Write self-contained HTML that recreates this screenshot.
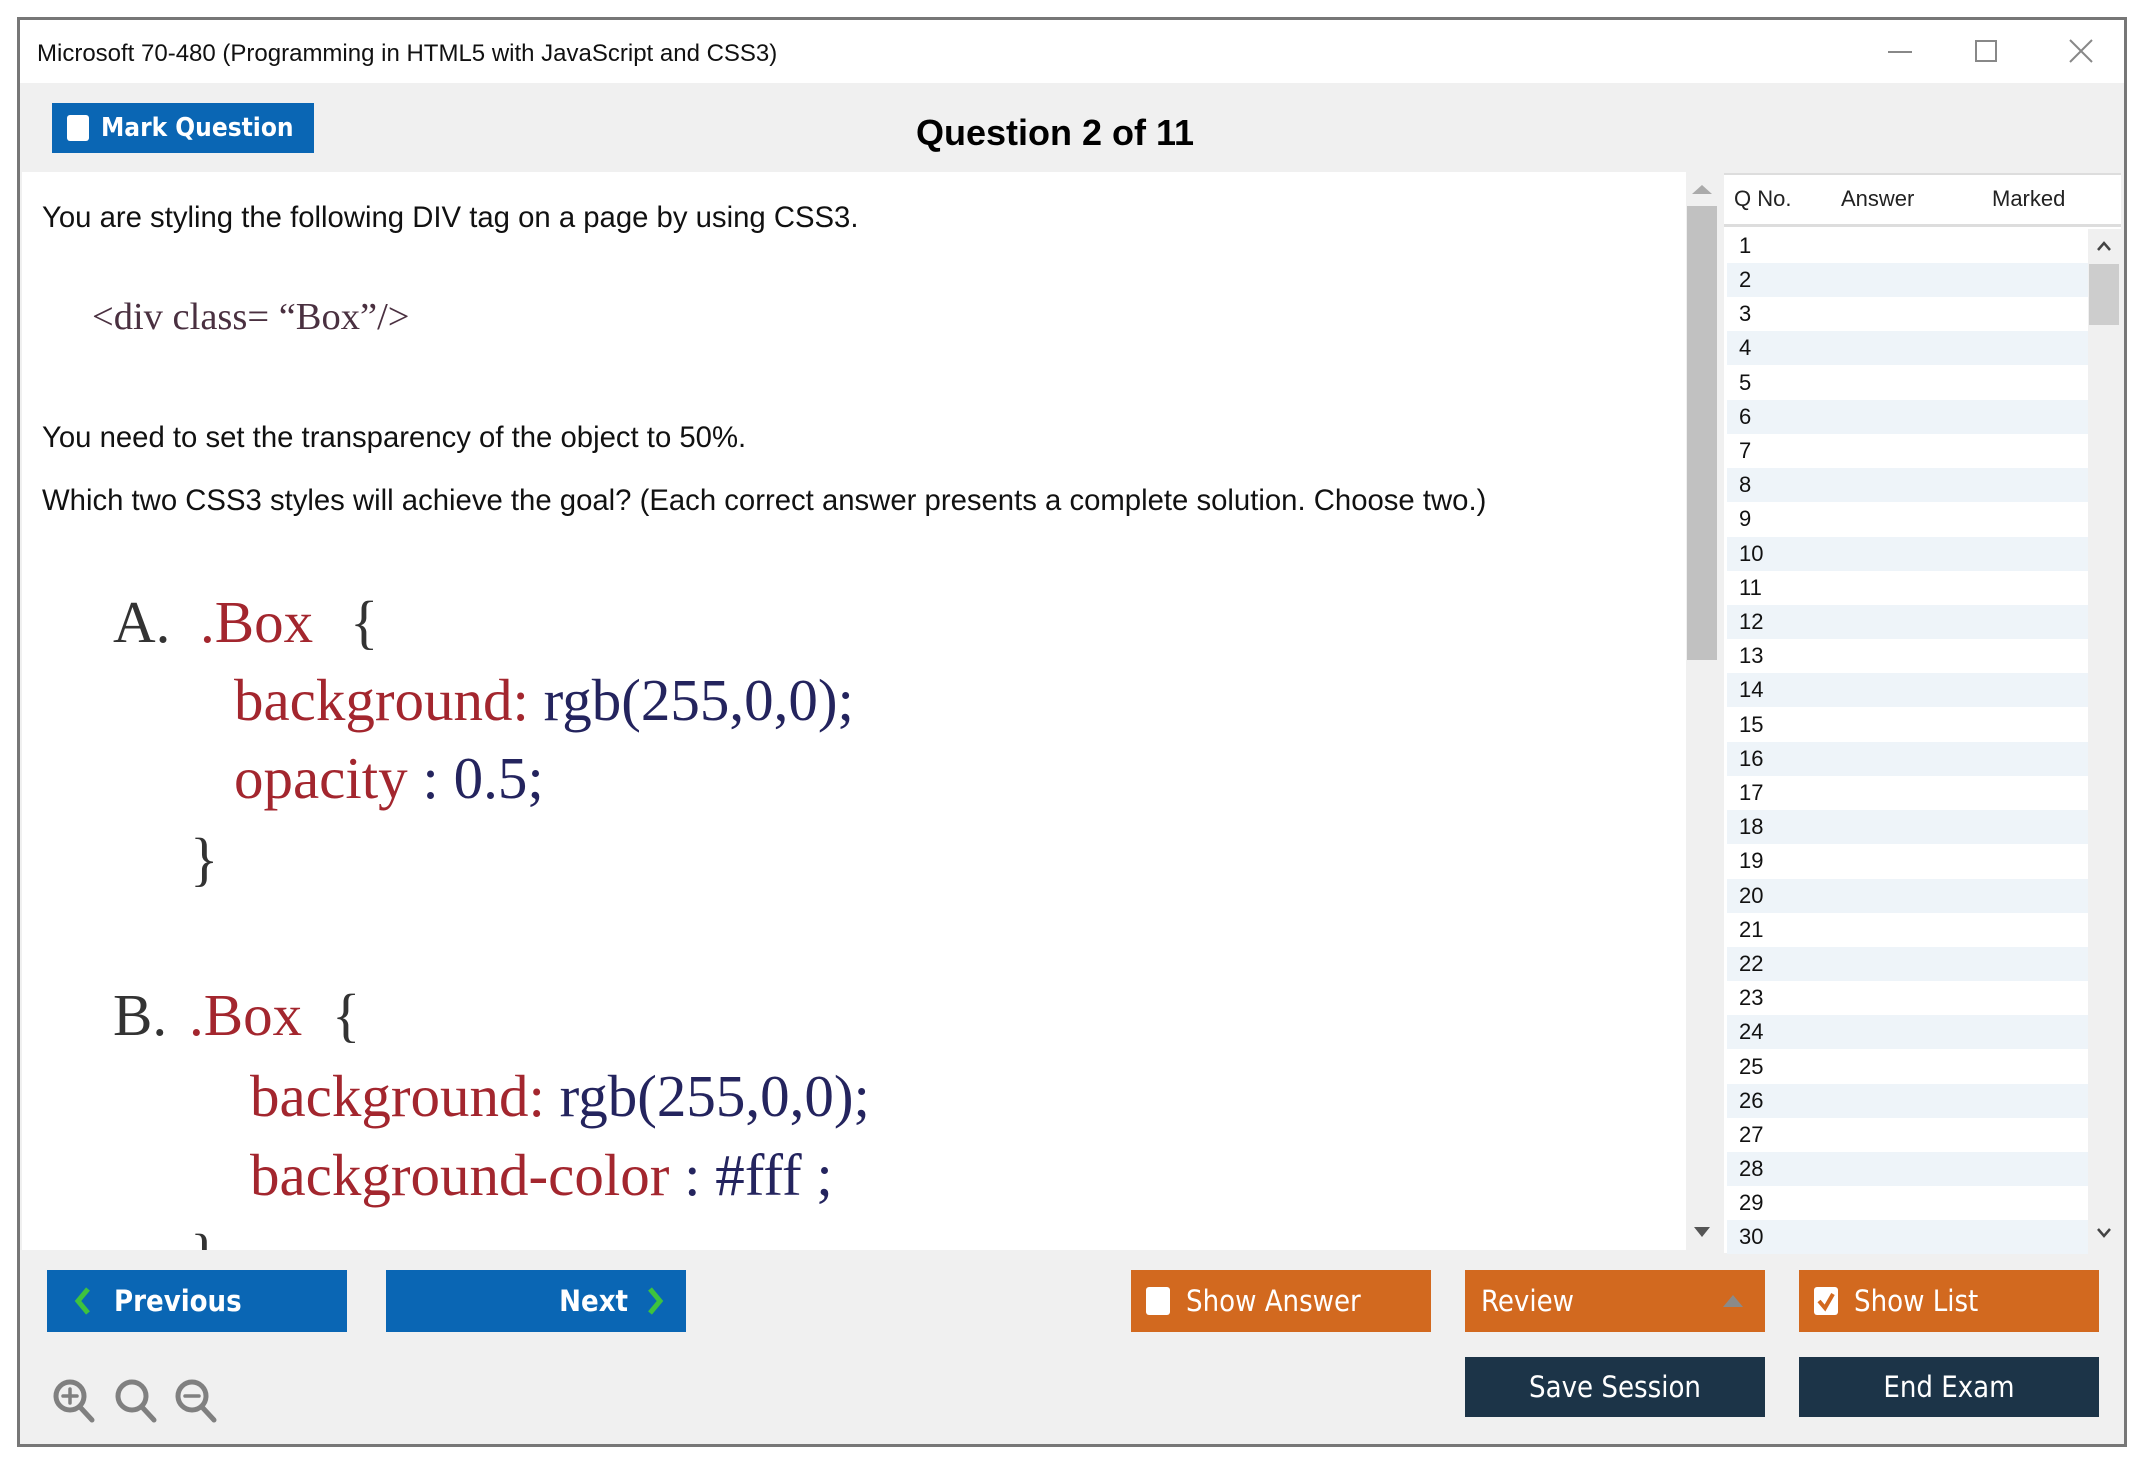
<!DOCTYPE html>
<html><head><meta charset="utf-8">
<style>
*{margin:0;padding:0;box-sizing:border-box}
body{width:2150px;height:1470px;background:#fff;position:relative;overflow:hidden;font-family:"Liberation Sans",sans-serif}
.a{position:absolute;white-space:nowrap}
.win{position:absolute;left:17px;top:17px;width:2110px;height:1430px;border:3px solid #777;background:#f0f0f0}
.t{font-size:29.3px;color:#111;line-height:34px}
.serif{font-family:"Liberation Serif",serif}
.r{color:#a3262e}.n{color:#24245e}
.btn{position:absolute;color:#fff;font-family:"DejaVu Sans Condensed","Liberation Sans",sans-serif;font-size:29px;display:flex;align-items:center}
.blue{background:#0a66b4}.or{background:#d2691f}.navy{background:#1c3448;justify-content:center}
.cb{width:24px;height:28px;background:#fff;border-radius:3px;display:inline-block}
.row{position:absolute;left:1727px;width:361px;height:34.2px;font-size:22px;color:#111;padding-left:12px;line-height:34px}
.row.e{background:#eef4f9}
</style></head><body>
<div class="win"></div>
<div class="a" style="left:20px;top:20px;width:2104px;height:63px;background:#fff"></div>
<div class="a" style="left:37px;top:40px;font-size:24px;color:#111">Microsoft 70-480 (Programming in HTML5 with JavaScript and CSS3)</div>
<div class="a" style="left:1888px;top:51px;width:24px;height:2px;background:#888"></div>
<div class="a" style="left:1975px;top:40px;width:22px;height:22px;border:2px solid #888"></div>
<svg class="a" style="left:2068px;top:38px" width="26" height="26"><path d="M2 2L24 24M24 2L2 24" stroke="#888" stroke-width="2"/></svg>
<div class="btn blue" style="left:52px;top:103px;width:262px;height:50px;padding-left:15px;font-weight:bold;font-size:26px"><span class="cb" style="margin-right:12px;width:22px;height:26px"></span>Mark Question</div>
<div class="a" style="left:0;width:2110px;top:112px;text-align:center;font-size:36px;font-weight:bold;color:#000">Question 2 of 11</div>
<div class="a" style="left:22px;top:172px;width:1664px;height:1078px;background:#fff;overflow:hidden">
<div class="a t" style="left:20px;top:29px">You are styling the following DIV tag on a page by using CSS3.</div>
<div class="a serif" style="left:70px;top:123px;font-size:38.5px;color:#4a3040">&lt;div class= “Box”/&gt;</div>
<div class="a t" style="left:20px;top:249px">You need to set the transparency of the object to 50%.</div>
<div class="a t" style="left:20px;top:312px">Which two CSS3 styles will achieve the goal? (Each correct answer presents a complete solution. Choose two.)</div>
<div class="a serif" style="left:91px;top:416px;font-size:59px;color:#333">A.</div>
<div class="a serif r" style="left:178px;top:416px;font-size:59px">.Box</div>
<div class="a serif" style="left:328px;top:416px;font-size:59px;color:#333">{</div>
<div class="a serif" style="left:212px;top:494px;font-size:59px"><span class="r">background:</span> <span class="n">rgb(255,0,0);</span></div>
<div class="a serif" style="left:212px;top:572px;font-size:59px"><span class="r">opacity</span> <span class="n">: 0.5;</span></div>
<div class="a serif" style="left:168px;top:653px;font-size:59px;color:#333">}</div>
<div class="a serif" style="left:91px;top:809px;font-size:59px;color:#333">B.</div>
<div class="a serif r" style="left:167px;top:809px;font-size:59px">.Box</div>
<div class="a serif" style="left:310px;top:809px;font-size:59px;color:#333">{</div>
<div class="a serif" style="left:228px;top:890px;font-size:59px"><span class="r">background:</span> <span class="n">rgb(255,0,0);</span></div>
<div class="a serif" style="left:228px;top:969px;font-size:59px"><span class="r">background-color</span> <span class="n">: #fff ;</span></div>
<div class="a serif" style="left:168px;top:1049px;font-size:59px;color:#333">}</div>
</div>
<div class="a" style="left:1686px;top:172px;width:33px;height:1078px;background:#f0f0f0"></div>
<div class="a" style="left:1692px;top:185px;border-left:10px solid transparent;border-right:10px solid transparent;border-bottom:9px solid #aaa"></div>
<div class="a" style="left:1687px;top:206px;width:30px;height:454px;background:#c1c1c1"></div>
<div class="a" style="left:1694px;top:1227px;border-left:8px solid transparent;border-right:8px solid transparent;border-top:10px solid #555"></div>
<div class="a" style="left:1724px;top:173px;width:397px;height:1080px;background:#fff;border-top:2px solid #ddd"></div>
<div class="a" style="left:1724px;top:224px;width:397px;height:3px;background:#ddd"></div>
<div class="a" style="left:1734px;top:186px;font-size:22px;color:#222">Q No.</div>
<div class="a" style="left:1841px;top:186px;font-size:22px;color:#222">Answer</div>
<div class="a" style="left:1992px;top:186px;font-size:22px;color:#222">Marked</div>
<div class="row" style="top:229px">1</div><div class="row e" style="top:263px">2</div><div class="row" style="top:297px">3</div><div class="row e" style="top:331px">4</div><div class="row" style="top:366px">5</div><div class="row e" style="top:400px">6</div><div class="row" style="top:434px">7</div><div class="row e" style="top:468px">8</div><div class="row" style="top:502px">9</div><div class="row e" style="top:537px">10</div><div class="row" style="top:571px">11</div><div class="row e" style="top:605px">12</div><div class="row" style="top:639px">13</div><div class="row e" style="top:673px">14</div><div class="row" style="top:708px">15</div><div class="row e" style="top:742px">16</div><div class="row" style="top:776px">17</div><div class="row e" style="top:810px">18</div><div class="row" style="top:844px">19</div><div class="row e" style="top:879px">20</div><div class="row" style="top:913px">21</div><div class="row e" style="top:947px">22</div><div class="row" style="top:981px">23</div><div class="row e" style="top:1015px">24</div><div class="row" style="top:1050px">25</div><div class="row e" style="top:1084px">26</div><div class="row" style="top:1118px">27</div><div class="row e" style="top:1152px">28</div><div class="row" style="top:1186px">29</div><div class="row e" style="top:1220px">30</div>
<div class="a" style="left:2088px;top:229px;width:33px;height:1024px;background:#f0f0f0"></div>
<div class="a" style="left:2089px;top:264px;width:30px;height:61px;background:#cdcdcd"></div>
<svg class="a" style="left:2096px;top:240px" width="16" height="12"><path d="M2 10L8 3L14 10" stroke="#444" stroke-width="2.5" fill="none"/></svg>
<svg class="a" style="left:2096px;top:1227px" width="16" height="12"><path d="M2 2L8 9L14 2" stroke="#444" stroke-width="2.5" fill="none"/></svg>
<div class="btn blue" style="left:47px;top:1270px;width:300px;height:62px;font-weight:bold"><svg style="margin:0 22px 0 27px" width="18" height="30"><path d="M14 3L4 15L14 27" stroke="#3ec33e" stroke-width="5" fill="none"/></svg>Previous</div>
<div class="btn blue" style="left:386px;top:1270px;width:300px;height:62px;font-weight:bold;justify-content:flex-end;padding-right:22px">Next<svg style="margin-left:18px" width="18" height="30"><path d="M4 3L14 15L4 27" stroke="#3ec33e" stroke-width="5" fill="none"/></svg></div>
<div class="btn or" style="left:1131px;top:1270px;width:300px;height:62px;padding-left:15px"><span class="cb" style="margin-right:16px"></span>Show Answer</div>
<div class="btn or" style="left:1465px;top:1270px;width:300px;height:62px;padding-left:16px">Review<span style="margin-left:auto;margin-right:22px;border-left:10px solid transparent;border-right:10px solid transparent;border-bottom:12px solid #8a8a8a"></span></div>
<div class="btn or" style="left:1799px;top:1270px;width:300px;height:62px;padding-left:15px"><span class="cb" style="margin-right:16px;position:relative"><svg style="position:absolute;left:2px;top:3px" width="20" height="22"><path d="M3 11L9 18L17 4" stroke="#d2691f" stroke-width="4" fill="none"/></svg></span>Show List</div>
<div class="btn navy" style="left:1465px;top:1357px;width:300px;height:60px">Save Session</div>
<div class="btn navy" style="left:1799px;top:1357px;width:300px;height:60px">End Exam</div>
<svg class="a" style="left:50px;top:1377px" width="180" height="48">
<g stroke="#808080" stroke-width="5" fill="none" stroke-linecap="round">
<circle cx="20" cy="19" r="14"/><path d="M30 30L42 43"/><path d="M13 19H27M20 12V26" stroke-width="3.5"/>
<circle cx="82" cy="19" r="14"/><path d="M92 30L104 43"/>
<circle cx="142" cy="19" r="14"/><path d="M152 30L164 43"/><path d="M135 19H149" stroke-width="3.5"/>
</g></svg>
</body></html>
